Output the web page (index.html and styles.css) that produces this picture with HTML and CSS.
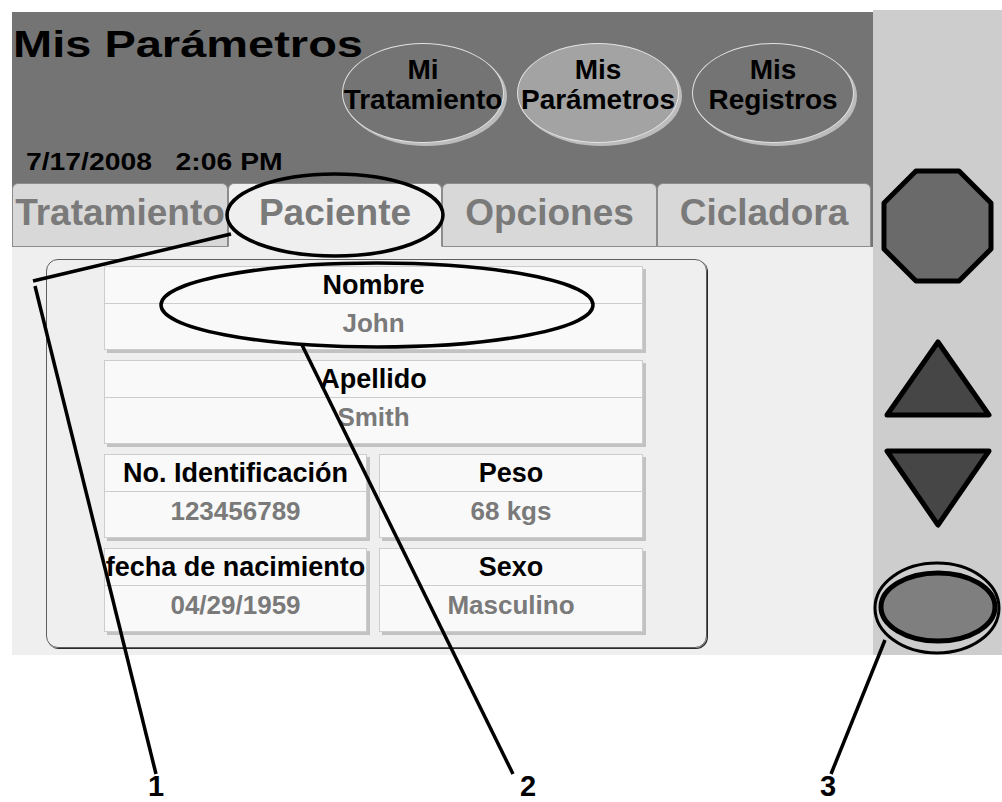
FILE: index.html
```html
<!DOCTYPE html>
<html lang="es">
<head>
    <meta charset="UTF-8">
    <meta name="viewport" content="width=device-width, initial-scale=1.0">
    <title>Mis Parámetros</title>
    <link rel="stylesheet" href="styles.css">
</head>
<body>

<div class="page">
    <div class="device">
        <div class="screen">
            <header class="top">
                <div class="top-left">
                    <h1 class="title"><span>Mis Parámetros</span></h1>
                    <div class="clock">7/17/2008   2:06 PM</div>
                </div>
                <nav class="menu">
                    <div class="pill">Mi<br>Tratamiento</div>
                    <div class="pill active">Mis<br>Parámetros</div>
                    <div class="pill">Mis<br>Registros</div>
                </nav>
            </header>

            <div class="tabs">
                <div class="tab">Tratamiento</div>
                <div class="tab active">Paciente</div>
                <div class="tab">Opciones</div>
                <div class="tab">Cicladora</div>
            </div>

            <div class="content">
                <div class="card">
                    <div class="fields">
                        <div class="field wide">
                            <div class="label">Nombre</div>
                            <div class="value">John</div>
                        </div>
                        <div class="field wide">
                            <div class="label">Apellido</div>
                            <div class="value">Smith</div>
                        </div>
                        <div class="field">
                            <div class="label">No. Identificación</div>
                            <div class="value">123456789</div>
                        </div>
                        <div class="field">
                            <div class="label">Peso</div>
                            <div class="value">68 kgs</div>
                        </div>
                        <div class="field">
                            <div class="label">fecha de nacimiento</div>
                            <div class="value">04/29/1959</div>
                        </div>
                        <div class="field">
                            <div class="label">Sexo</div>
                            <div class="value">Masculino</div>
                        </div>
                    </div>
                </div>
            </div>
        </div>

        <aside class="side">
            <svg class="stop" width="113" height="116" viewBox="0 0 113 116">
                <polygon points="35,3 78,3 110,35 110,81 78,113 35,113 3,81 3,35" />
            </svg>
            <svg class="up" width="112" height="84" viewBox="0 0 112 84">
                <polygon points="56,5 107,78 5,78" />
            </svg>
            <svg class="down" width="112" height="84" viewBox="0 0 112 84">
                <polygon points="5,5 107,5 56,79" />
            </svg>
            <svg class="enter" width="124" height="76" viewBox="0 0 124 76">
                <ellipse cx="62" cy="38" rx="57" ry="34" />
            </svg>
        </aside>
    </div>

    <!-- callout marks drawn over the screen -->
    <svg class="callouts" width="1002" height="802" viewBox="0 0 1002 802">
        <ellipse cx="335" cy="215" rx="108" ry="41" />
        <line x1="33" y1="281" x2="231" y2="234" />
        <line x1="35" y1="286" x2="156" y2="774" />
        <ellipse cx="377" cy="305" rx="216" ry="42" />
        <line x1="302" y1="345" x2="513" y2="774" />
        <ellipse class="ring" cx="937" cy="608" rx="62" ry="45" />
        <line x1="885" y1="640" x2="831" y2="774" />
        <text x="156" y="796">1</text>
        <text x="528" y="796">2</text>
        <text x="828" y="796">3</text>
    </svg>
</div>

</body>
</html>
```

FILE: styles.css
```css
body {
    margin: 0;
    background-color: #fff;
    font-family: "Liberation Sans", Arial, sans-serif;
    font-weight: bold;
}

.page {
    position: relative;
    width: 1002px;
    height: 802px;
    overflow: hidden;
}

.device {
    display: flex;
    padding: 10px 0 0 12px;
}

.screen {
    width: 861px;
    height: 643px;
    margin-top: 2px;
    display: flex;
    flex-direction: column;
}

/* header */
.top {
    height: 171px;
    background-color: #747474;
    display: flex;
    justify-content: space-between;
}

.top-left {
    display: flex;
    flex-direction: column;
    justify-content: space-between;
    padding-left: 1px;
}

.title {
    margin: 13px 0 0;
    font-size: 37px;
    line-height: 40px;
    color: #000;
}

.title span {
    display: inline-block;
    transform: scaleX(1.27);
    transform-origin: left;
    white-space: nowrap;
}

.clock {
    white-space: pre;
    font-size: 24px;
    line-height: 24px;
    margin: 0 0 9px 13px;
    transform: scaleX(1.18);
    transform-origin: left;
}

.menu {
    display: flex;
    align-items: flex-start;
    gap: 13px;
    margin: 31px 19px 0 0;
}

.pill {
    width: 162px;
    height: 100px;
    box-sizing: border-box;
    border: 1px solid #e2e2e2;
    border-radius: 50%;
    background-color: #747474;
    box-shadow: 3px 3px 0 #bcbcbc;
    text-align: center;
    font-size: 28px;
    line-height: 30px;
    padding-top: 11px;
    white-space: nowrap;
}

.pill.active {
    background-color: #a3a3a3;
}

/* tabs */
.tabs {
    display: grid;
    grid-template-columns: 216px 214px 215px 214px;
    height: 64px;
    background-color: #747474;
}

.tab {
    box-sizing: border-box;
    background-color: #d8d8d8;
    border: 1px solid #8c8c8c;
    border-radius: 6px 6px 0 0;
    color: #7a7a7a;
    font-size: 37px;
    line-height: 58px;
    text-align: center;
    white-space: nowrap;
}

.tab.active {
    background-color: #efefef;
    border-bottom-color: #efefef;
}

/* patient card */
.content {
    flex: 1;
    background-color: #efefef;
    padding: 12px 0 0 34px;
}

.card {
    width: 661px;
    height: 389px;
    box-sizing: border-box;
    border: 1px solid #5e5e5e;
    border-radius: 12px;
    box-shadow: 1px 1px 0 #2a2a2a;
    padding: 6px 0 0 57px;
}

.fields {
    display: grid;
    grid-template-columns: 263px 264px;
    grid-auto-rows: 84px;
    column-gap: 12px;
    row-gap: 10px;
}

.field {
    display: flex;
    flex-direction: column;
    background-color: #f9f9f9;
    border: 1px solid #cdcdcd;
    box-shadow: 3px 3px 0 #c2c2c2;
}

.field.wide {
    grid-column: span 2;
}

.label {
    height: 36px;
    border-bottom: 1px solid #cdcdcd;
    font-size: 27px;
    line-height: 36px;
    text-align: center;
    white-space: nowrap;
    color: #000;
}

.value {
    flex: 1;
    color: #7a7a7a;
    font-size: 26px;
    line-height: 38px;
    text-align: center;
}

/* hard keys */
.side {
    width: 129px;
    height: 645px;
    background-color: #cdcdcd;
    display: flex;
    flex-direction: column;
    align-items: center;
}

.side svg {
    display: block;
    stroke: #000;
    stroke-width: 5;
    stroke-linejoin: round;
}

.stop {
    margin-top: 158px;
    fill: #6a6a6a;
}

.up {
    margin-top: 53px;
    fill: #464646;
}

.down {
    margin-top: 25px;
    fill: #464646;
}

.enter {
    margin-top: 39px;
    fill: #7f7f7f;
}

/* annotation overlay */
.callouts {
    position: absolute;
    left: 0;
    top: 0;
    pointer-events: none;
    fill: none;
    stroke: #000;
    stroke-width: 3.5;
}

.callouts .ring {
    stroke-width: 3;
}

.callouts text {
    fill: #000;
    stroke: none;
    font-family: "Liberation Sans", Arial, sans-serif;
    font-weight: bold;
    font-size: 29px;
    text-anchor: middle;
}
```
